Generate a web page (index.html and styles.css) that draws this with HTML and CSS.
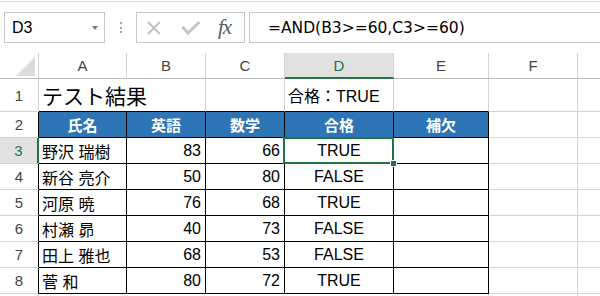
FILE: index.html
```html
<!DOCTYPE html>
<html lang="ja">
<head>
    <meta charset="UTF-8">
    <meta name="viewport" content="width=device-width, initial-scale=1.0">
    <title>テスト結果</title>
    <link rel="stylesheet" href="styles.css">
</head>
<body>
    <div class="ribbon-edge"></div>

    <!-- Formula bar -->
    <div class="formula-bar">
        <div class="name-box">
            <span>D3</span>
            <span class="dropdown"></span>
        </div>
        <div class="grip"><i></i><i></i><i></i></div>
        <div class="fx-buttons">
            <svg class="btn-cancel" width="14" height="14" viewBox="0 0 14 14">
                <path d="M1 1 L13 13 M13 1 L1 13"/>
            </svg>
            <svg class="btn-enter" width="20" height="14" viewBox="0 0 20 14">
                <polyline points="1.5,6 7,12 18.5,1"/>
            </svg>
            <span class="fx">fx</span>
        </div>
        <div class="formula">=AND(B3&gt;=60,C3&gt;=60)</div>
    </div>

    <!-- Worksheet -->
    <table class="sheet">
        <colgroup>
            <col class="w-rowhead">
            <col class="w-a">
            <col class="w-b">
            <col class="w-c">
            <col class="w-d">
            <col class="w-e">
            <col class="w-f">
            <col class="w-g">
        </colgroup>
        <thead>
            <tr class="col-heads">
                <th class="corner"><span class="corner-mark"></span></th>
                <th>A</th>
                <th>B</th>
                <th>C</th>
                <th class="active">D</th>
                <th>E</th>
                <th>F</th>
                <th></th>
            </tr>
        </thead>
        <tbody>
            <tr class="row-title">
                <th>1</th>
                <td colspan="2" class="title edge-bottom">テスト結果</td>
                <td class="edge-bottom"></td>
                <td class="note edge-bottom">合格：TRUE</td>
                <td class="edge-bottom"></td>
                <td></td>
                <td></td>
            </tr>
            <tr class="row-head">
                <th class="edge">2</th>
                <td class="hd">氏名</td>
                <td class="hd">英語</td>
                <td class="hd">数学</td>
                <td class="hd">合格</td>
                <td class="hd">補欠</td>
                <td></td>
                <td></td>
            </tr>
            <tr>
                <th class="active">3</th>
                <td class="cell name">野沢 瑞樹</td>
                <td class="cell num">83</td>
                <td class="cell num">66</td>
                <td class="cell flag selected">TRUE</td>
                <td class="cell"></td>
                <td></td>
                <td></td>
            </tr>
            <tr>
                <th class="edge">4</th>
                <td class="cell name">新谷 亮介</td>
                <td class="cell num">50</td>
                <td class="cell num">80</td>
                <td class="cell flag">FALSE</td>
                <td class="cell"></td>
                <td></td>
                <td></td>
            </tr>
            <tr>
                <th class="edge">5</th>
                <td class="cell name">河原 暁</td>
                <td class="cell num">76</td>
                <td class="cell num">68</td>
                <td class="cell flag">TRUE</td>
                <td class="cell"></td>
                <td></td>
                <td></td>
            </tr>
            <tr>
                <th class="edge">6</th>
                <td class="cell name">村瀬 昴</td>
                <td class="cell num">40</td>
                <td class="cell num">73</td>
                <td class="cell flag">FALSE</td>
                <td class="cell"></td>
                <td></td>
                <td></td>
            </tr>
            <tr>
                <th class="edge">7</th>
                <td class="cell name">田上 雅也</td>
                <td class="cell num">68</td>
                <td class="cell num">53</td>
                <td class="cell flag">FALSE</td>
                <td class="cell"></td>
                <td></td>
                <td></td>
            </tr>
            <tr>
                <th class="edge">8</th>
                <td class="cell name">菅 和</td>
                <td class="cell num">80</td>
                <td class="cell num">72</td>
                <td class="cell flag">TRUE</td>
                <td class="cell"></td>
                <td></td>
                <td></td>
            </tr>
            <tr>
                <th></th>
                <td></td>
                <td></td>
                <td></td>
                <td></td>
                <td></td>
                <td></td>
                <td></td>
            </tr>
        </tbody>
    </table>
</body>
</html>
```

FILE: styles.css
```css
:root {
    --grid: #d4d4d4;
    --frame: #c6c6c6;
    --head-text: #444;
    --select: #217346;
    --select-bg: #e1e1e1;
    --line: #000;
    --table-head: #2e75b6;
}

body {
    margin: 0;
    background: #fff;
    color: #000;
    font-family: "Liberation Sans", "Noto Sans CJK JP", sans-serif;
    overflow: hidden;
}

.ribbon-edge {
    height: 1px;
    margin-top: 1px;
    background: var(--grid);
}

/* Formula bar */

.formula-bar {
    display: flex;
    height: 31px;
    margin-top: 10px;
    padding-left: 4px;
}

.name-box {
    display: flex;
    align-items: center;
    box-sizing: border-box;
    width: 101px;
    padding: 0 6px 0 7px;
    border: 1px solid var(--frame);
    font-size: 16px;
}

.dropdown {
    margin-left: auto;
    border-top: 4px solid #777;
    border-left: 3.5px solid transparent;
    border-right: 3.5px solid transparent;
}

.grip {
    display: flex;
    flex-direction: column;
    align-items: center;
    justify-content: center;
    gap: 2.5px;
    width: 31px;
}

.grip i {
    width: 2px;
    height: 2px;
    background: #a6a6a6;
}

.fx-buttons {
    display: flex;
    align-items: center;
    box-sizing: border-box;
    width: 109px;
    padding-left: 10px;
    border: 1px solid var(--frame);
}

.btn-cancel {
    stroke: #bfbfbf;
    stroke-width: 1.8;
    fill: none;
}

.btn-enter {
    margin-left: 20px;
    stroke: #c4c4c4;
    stroke-width: 3;
    fill: none;
}

.fx {
    margin-left: 17px;
    font-family: "Liberation Serif", serif;
    font-style: italic;
    font-size: 21px;
    color: #5a5a5a;
    letter-spacing: -1px;
}

.formula {
    display: flex;
    align-items: center;
    flex: 1;
    margin-left: 4px;
    padding-left: 18px;
    border: 1px solid var(--frame);
    border-right: none;
    font-family: "DejaVu Sans", sans-serif;
    font-size: 15.5px;
}

/* Worksheet */

.sheet {
    margin-top: 10px;
    width: 618px;
    table-layout: fixed;
    border-collapse: separate;
    border-spacing: 0;
    font-size: 16px;
}

.w-rowhead { width: 39px; }
.w-a { width: 88px; }
.w-b { width: 79px; }
.w-c { width: 79px; }
.w-d { width: 109px; }
.w-e { width: 95px; }
.w-f { width: 89px; }
.w-g { width: 40px; }

.sheet th,
.sheet td {
    padding: 0;
    border-right: 1px solid var(--grid);
    border-bottom: 1px solid var(--grid);
    white-space: nowrap;
}

.sheet th {
    font-weight: normal;
    font-size: 15px;
    color: var(--head-text);
    text-align: center;
}

.col-heads { height: 26px; }
.sheet tbody tr { height: 26px; }
.sheet tbody tr.row-title { height: 33px; }

.col-heads th {
    border-bottom-color: #bfbfbf;
}

.col-heads th.active {
    background: var(--select-bg);
    color: var(--select);
    border-bottom: 2px solid var(--select);
}

.corner {
    position: relative;
}

.corner-mark {
    position: absolute;
    right: 3px;
    bottom: 2px;
    width: 0;
    height: 0;
    border-left: 19px solid transparent;
    border-bottom: 19px solid #dcdcdc;
}

.sheet tbody th.edge {
    border-right-color: var(--line);
}

.sheet tbody th.active {
    background: var(--select-bg);
    color: var(--select);
    border-right: 2px solid var(--select);
}

.sheet td.title {
    padding-left: 3px;
    font-size: 21px;
}

.sheet td.note {
    padding-left: 3px;
}

.sheet td.edge-bottom {
    border-bottom-color: var(--line);
}

.sheet td.hd {
    background: var(--table-head);
    color: #fff;
    font-weight: bold;
    font-size: 15px;
    text-align: center;
    border-right-color: var(--line);
    border-bottom-color: var(--line);
}

.sheet td.cell {
    border-right-color: var(--line);
    border-bottom-color: var(--line);
}

.sheet td.name {
    padding-left: 3px;
}

.sheet td.num {
    padding-right: 4px;
    text-align: right;
}

.sheet td.flag {
    text-align: center;
}

.sheet td.selected {
    position: relative;
}

.selected::before {
    content: "";
    position: absolute;
    top: -1px;
    left: -2px;
    right: -1px;
    bottom: -1px;
    border: 2px solid var(--select);
}

.selected::after {
    content: "";
    position: absolute;
    right: -4px;
    bottom: -4px;
    width: 5px;
    height: 5px;
    background: var(--select);
    border: 1px solid #fff;
}
```
